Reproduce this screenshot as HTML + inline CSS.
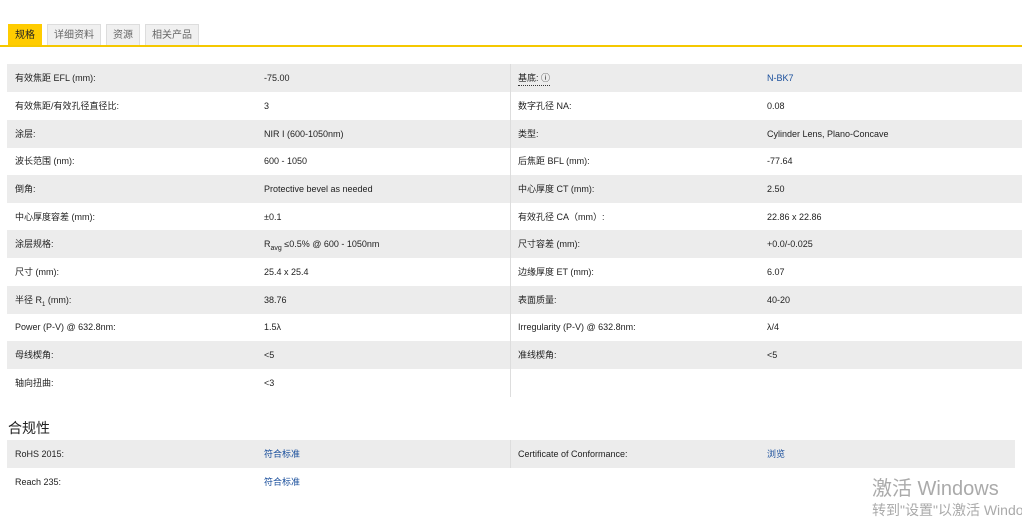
<!DOCTYPE html><html><head><meta charset="utf-8"><style>
body{margin:0;width:1022px;height:517px;overflow:hidden;background:#fff;font-family:"Liberation Sans","Noto Sans CJK SC",sans-serif;font-size:9px;color:#222;position:relative}
.tabs{position:absolute;left:8px;top:24px;display:flex;gap:5px}
.tab{height:21px;line-height:22px;padding:0 6px;background:#f0f0f0;border:1px solid #ddd;border-bottom:none;color:#666;font-size:10px}
.tab.a{background:#fc0;border-color:#fc0;color:#222}
.line{position:absolute;left:0;top:45px;width:1022px;height:2px;background:#f5c800}
.row{position:absolute;left:7px;width:1015px;height:28px;line-height:28px}
.row.g{background:#ececec}
.row span{position:absolute;white-space:nowrap}
.c1{left:8px}.c2{left:257px}.c3{left:511px}.c4{left:760px}
.dv{position:absolute;left:503px;top:0;height:28px;width:1px;background:#ddd}
a{color:#1a4f9c;text-decoration:none}
h3{position:absolute;left:8px;top:418px;margin:0;font-size:14px;font-weight:normal}
.wm{position:absolute;color:#aaa;white-space:nowrap}
</style></head><body>
<div class="tabs"><div class="tab a">规格</div><div class="tab">详细资料</div><div class="tab">资源</div><div class="tab">相关产品</div></div>
<div class="line"></div>
<div class="row g" style="top:64px"><div class="dv"></div><span class="c1">有效焦距 EFL (mm):</span><span class="c2">-75.00</span><span class="c3" style="border-bottom:1px dotted #333;line-height:14px;top:7px">基底: ⓘ</span><span class="c4"><a>N-BK7</a></span></div>
<div class="row" style="top:92px"><div class="dv"></div><span class="c1">有效焦距/有效孔径直径比:</span><span class="c2">3</span><span class="c3">数字孔径 NA:</span><span class="c4">0.08</span></div>
<div class="row g" style="top:120px"><div class="dv"></div><span class="c1">涂层:</span><span class="c2">NIR I (600-1050nm)</span><span class="c3">类型:</span><span class="c4">Cylinder Lens, Plano-Concave</span></div>
<div class="row" style="top:147px"><div class="dv"></div><span class="c1">波长范围 (nm):</span><span class="c2">600 - 1050</span><span class="c3">后焦距 BFL (mm):</span><span class="c4">-77.64</span></div>
<div class="row g" style="top:175px"><div class="dv"></div><span class="c1">倒角:</span><span class="c2">Protective bevel as needed</span><span class="c3">中心厚度 CT (mm):</span><span class="c4">2.50</span></div>
<div class="row" style="top:203px"><div class="dv"></div><span class="c1">中心厚度容差 (mm):</span><span class="c2">±0.1</span><span class="c3">有效孔径 CA（mm）:</span><span class="c4">22.86 x 22.86</span></div>
<div class="row g" style="top:230px"><div class="dv"></div><span class="c1">涂层规格:</span><span class="c2">R<sub style="font-size:7px">avg</sub> ≤0.5% @ 600 - 1050nm</span><span class="c3">尺寸容差 (mm):</span><span class="c4">+0.0/-0.025</span></div>
<div class="row" style="top:258px"><div class="dv"></div><span class="c1">尺寸 (mm):</span><span class="c2">25.4 x 25.4</span><span class="c3">边缘厚度 ET (mm):</span><span class="c4">6.07</span></div>
<div class="row g" style="top:286px"><div class="dv"></div><span class="c1">半径 R<sub style="font-size:6px">1</sub> (mm):</span><span class="c2">38.76</span><span class="c3">表面质量:</span><span class="c4">40-20</span></div>
<div class="row" style="top:313px"><div class="dv"></div><span class="c1">Power (P-V) @ 632.8nm:</span><span class="c2">1.5λ</span><span class="c3">Irregularity (P-V) @ 632.8nm:</span><span class="c4">λ/4</span></div>
<div class="row g" style="top:341px"><div class="dv"></div><span class="c1">母线楔角:</span><span class="c2">&lt;5</span><span class="c3">准线楔角:</span><span class="c4">&lt;5</span></div>
<div class="row" style="top:369px"><div class="dv"></div><span class="c1">轴向扭曲:</span><span class="c2">&lt;3</span></div>
<h3>合规性</h3>
<div class="row g" style="top:440px;width:1008px"><div class="dv"></div><span class="c1">RoHS 2015:</span><span class="c2"><a>符合标准</a></span><span class="c3">Certificate of Conformance:</span><span class="c4"><a>浏览</a></span></div>
<div class="row" style="top:468px"><span class="c1">Reach 235:</span><span class="c2"><a>符合标准</a></span></div>
<div class="wm" style="left:872px;top:472px;font-size:20px">激活 Windows</div>
<div class="wm" style="left:872px;top:500px;font-size:14px">转到"设置"以激活 Windows。</div>
</body></html>
